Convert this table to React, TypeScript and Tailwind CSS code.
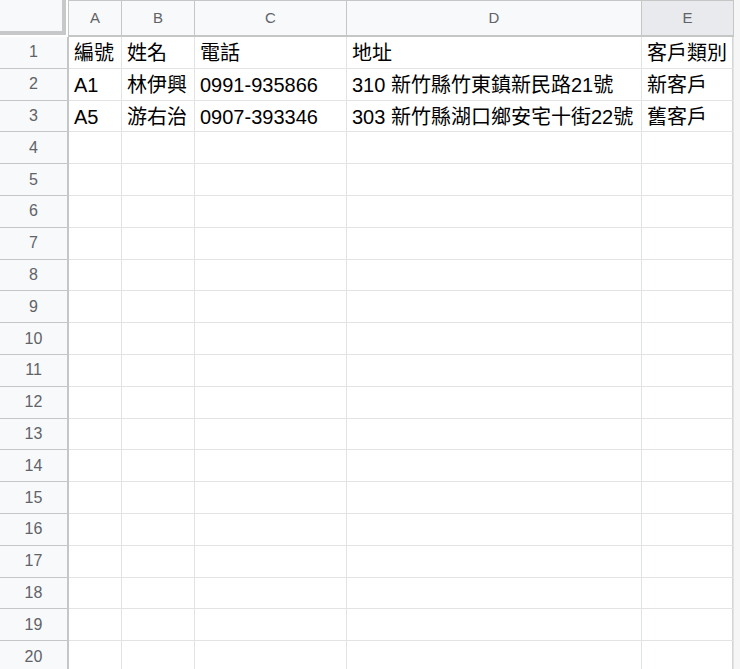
const cols = ["A", "B", "C", "D", "E"];

const widths = ["w-[53px]", "w-[73px]", "w-[152px]", "w-[295px]", "w-[92px]"];

const data: string[][] = [
  ["編號", "姓名", "電話", "地址", "客戶類別"],
  ["A1", "林伊興", "0991-935866", "310 新竹縣竹東鎮新民路21號", "新客戶"],
  ["A5", "游右治", "0907-393346", "303 新竹縣湖口鄉安宅十街22號", "舊客戶"],
];

const rows = Array.from({ length: 20 }, (_, i) => i + 1);

export default function App() {
  return (
    <div
      className="flex h-[669px] w-[740px] overflow-hidden bg-white"
      style={{ fontFamily: '"Liberation Sans", Arial, "Noto Sans CJK TC", sans-serif' }}
    >
      <div className="flex w-[734px] shrink-0 flex-col border-r-2 border-[#d3d5d6]">
        {/* column headers */}
        <div className="flex h-[37px] shrink-0">
          <div className="w-[69px] shrink-0 border-r border-[#c4c7c5] bg-white">
            <div className="h-[35px] w-[66px] border-b-4 border-r-4 border-[#c6c8ca] bg-[#f8f9fa]" />
          </div>
          {cols.map((c, i) => (
            <div
              key={c}
              className={`${widths[i]} flex shrink-0 items-center justify-center border-b-2 border-r border-t border-[#c4c7c5] text-[15px] text-[#5f6368] ${
                c === "E" ? "bg-[#e8eaed]" : "bg-[#f8f9fa]"
              }`}
            >
              {c}
            </div>
          ))}
        </div>
        {rows.map((r) => (
          <div key={r} className="flex h-[31.8px] shrink-0">
            <div className="flex w-[69px] shrink-0 items-center justify-center border-b border-r-2 border-[#c4c7c5] bg-[#f8f9fa] text-[16px] text-[#5f6368]">
              {r}
            </div>
            {cols.map((c, i) => (
              <div
                key={c}
                className={`${widths[i]} flex shrink-0 items-center overflow-hidden whitespace-nowrap border-b border-r border-[#e2e3e3] pl-[5px] pt-[2px] text-[20px] text-black`}
              >
                {data[r - 1]?.[i] ?? ""}
              </div>
            ))}
          </div>
        ))}
      </div>
      <div className="flex-1 bg-[#f6f6f6]" />
    </div>
  );
}
